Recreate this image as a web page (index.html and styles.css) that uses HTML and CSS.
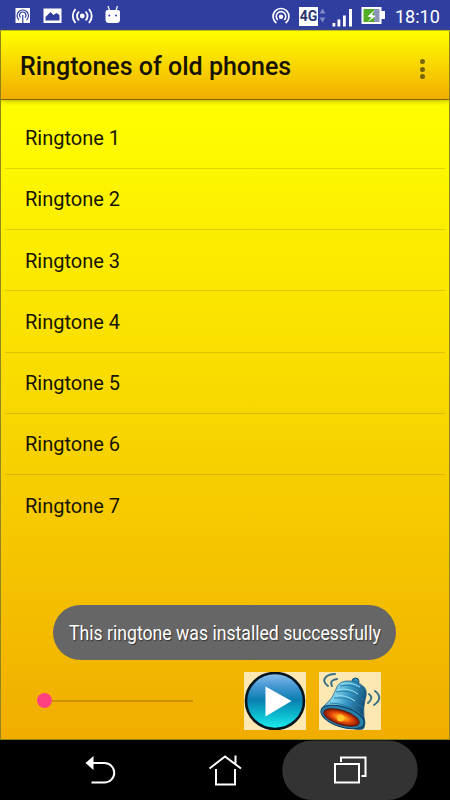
FILE: index.html
```html
<!DOCTYPE html>
<html lang="en">
<head>
<meta charset="utf-8">
<title>Ringtones of old phones</title>
<link rel="stylesheet" href="styles.css">
</head>
<body>
<div class="screen">
  <header class="status">
    <svg class="status-left" width="124" height="30" viewBox="0 0 124 30" fill="none">
      <path fill="#fff" d="M15.500 8h14.500v15h-14.500z"/>
      <g stroke="#303f9f" stroke-width="1.200"><path d="M19 20a5.700 5.700 0 1 1 7.500 0M20.500 17.500a3.200 3.200 0 1 1 4.500 0M22.800 15v8"/></g>
      <path fill="#fff" fill-rule="evenodd" d="M43.500 8.500h18V23h-18zM45.500 20.500h14v-5.500l-3-2-3 2-3-3-5 5z"/>
      <circle cx="82.300" cy="16" r="2.400" fill="#fff"/>
      <path stroke="#fff" stroke-width="1.800" d="M79 11.500q-4 4.500 0 9M85.600 11.500q4 4.500 0 9M75.500 9q-5.500 7 0 14M89 9q5.500 7 0 14"/>
      <path fill="#fff" d="M105.500 12q0-2 2-2h10.500q2 0 2 2v7.500q0 3.500-3.500 3.500h-7.500q-3.500 0-3.500-3.500z"/>
      <path stroke="#fff" stroke-width="1.200" d="m108 6 1.500 4.500M117.500 6 116 10.500"/>
      <circle cx="109.300" cy="15.500" r="1" fill="#303f9f"/><circle cx="116" cy="15.500" r="1" fill="#303f9f"/>
    </svg>
    <div class="status-right">
      <svg width="20" height="20" viewBox="0 0 20 20" fill="none" stroke="#fff" stroke-width="1.600"><path d="M5.400 17a8 8 0 1 1 9.200 0M6.800 14a4.800 4.800 0 1 1 6.400 0"/><circle cx="10" cy="10.800" r="2.200" fill="#fff" stroke="none"/></svg>
      <span class="net">4G</span>
      <svg class="rest" width="66" height="20" viewBox="0 0 66 20"><path fill="#7f88c3" d="m.5 6.500 3-5 3 5zM.5 10.500h6l-3 5z"/><path fill="#fff" d="M13.500 16h2.800v3.500h-2.800zM18.500 12.500h2.800v7h-2.800zM24 8.500h2.800v11H24zM30 2h3v17.500h-3zM42.500 0h20v4h3.500v8h-3.500v5h-20z"/><path fill="#53ac25" d="M44.500 2H55v13H44.500z"/><path fill="#8b96b8" d="M55 2h5.500v13H55z"/><path fill="#fff" d="m55.500 3-7 6.500 4 1-4 4.500 8.500-6-4-1z"/></svg>
      <time class="clock">18:10</time>
    </div>
  </header>
  <main class="app">
    <div class="toolbar">
      <h1>Ringtones of old phones</h1>
      <div class="more"><i></i><i></i><i></i></div>
    </div>
    <ul class="list">
      <li>Ringtone 1</li>
      <li>Ringtone 2</li>
      <li>Ringtone 3</li>
      <li>Ringtone 4</li>
      <li>Ringtone 5</li>
      <li>Ringtone 6</li>
      <li>Ringtone 7</li>
    </ul>
    <div class="toast"><span>This ringtone was installed successfully</span></div>
    <div class="controls">
      <div class="slider"><i class="thumb"></i><i class="track"></i></div>
      <svg class="tile" width="62" height="58" viewBox="0 0 62 58">
        <defs>
          <linearGradient id="blue" x1="0" y1="0" x2="0" y2="1"><stop offset="0" stop-color="#8cc0ec"/><stop offset=".22" stop-color="#4a9ad6"/><stop offset=".48" stop-color="#0a7fb0"/><stop offset=".7" stop-color="#0bafc8"/><stop offset="1" stop-color="#1bf0f0"/></linearGradient>
        </defs>
        <ellipse cx="31" cy="29" rx="29" ry="28" fill="url(#blue)" stroke="#06141d" stroke-width="2.600"/>
        <path fill="#fff" d="M21.500 14.500v30L47.500 29z"/>
      </svg>
      <svg class="tile" width="62" height="58" viewBox="0 0 62 58">
        <defs>
          <linearGradient id="bell" x1="0" y1="0" x2="1" y2=".35"><stop offset="0" stop-color="#2b88b5"/><stop offset=".35" stop-color="#80d2ea"/><stop offset=".65" stop-color="#3596c4"/><stop offset="1" stop-color="#155079"/></linearGradient>
          <radialGradient id="glow"><stop offset="0" stop-color="#ffe34a"/><stop offset=".25" stop-color="#ff9a18"/><stop offset=".6" stop-color="#e34708"/><stop offset="1" stop-color="#7c1607"/></radialGradient>
        </defs>
        <circle cx="36.500" cy="9.500" r="3.500" fill="#2d8cb5" stroke="#174e70"/>
        <path fill="url(#bell)" stroke="#17547b" stroke-width=".7" d="M2 38q2-4 6-7 6-5 9-14 2-7 10-8 11-1 18 6 4 4 1 13-2 9-1 17 2 6 0 11-3 3-9 1z"/>
        <path fill="none" stroke="#2478a4" stroke-width=".9" d="M21 14q13-3 24 6M17 20q15-4 28 8M15 26q15-2 29 10M11 31q18 0 33 13"/>
        <path fill="none" stroke="#9be0ef" d="M22 12q9-3 19 3M19 18q10-3 20 4M17 24q9-2 19 5"/>
        <ellipse cx="23.500" cy="45" rx="22.500" ry="10" transform="rotate(18 23.500 45)" fill="#247faa" stroke="#103d5c"/>
        <ellipse cx="22.500" cy="45.500" rx="18.500" ry="7" transform="rotate(18 22.500 45.500)" fill="url(#glow)" stroke="#5e190d"/>
        <circle cx="21.500" cy="46" r="3.500" fill="#ffc52b"/>
        <path fill="none" stroke="#397083" stroke-width="2" stroke-linecap="round" d="M9 14q-7-5-1-10 3-2 8-2M13 14q-3-6 5-7M50 22q5 4-1 9M56 19q9 7-1 14"/>
      </svg>
    </div>
  </main>
  <nav class="nav">
    <svg width="450" height="60" viewBox="0 0 450 60" fill="none" stroke="#fff" stroke-width="2">
      <path fill="#333" stroke="none" d="M312 .5h76a29.700 29.700 0 0 1 0 59.500h-76a29.700 29.700 0 0 1 0-59.500z"/>
      <path fill="#fff" stroke="none" d="m85.500 23 8-7v14z"/><path d="M92 23h12.500a9.700 9.700 0 0 1 0 19.500H91.500"/>
      <path d="m209.500 28.500 15.500-12 16 12M235.500 23.500v-8M216 29v15.500h19V29"/>
      <path d="M335 24h24v18.500h-24zM341 22v-4.500h24.500v18.500h-4"/>
    </svg>
  </nav>
</div>
</body>
</html>
```
FILE: styles.css
```css
* { box-sizing: border-box; }
body { margin: 0; font-family: Roboto, "Liberation Sans", sans-serif; }
.screen { width: 450px; height: 800px; display: flex; flex-direction: column; overflow: hidden; }
.status { height: 30px; background: #303f9f; display: flex; justify-content: space-between; color: #fff; }
.status-right { display: flex; align-items: center; padding-right: 10px; height: 32px; }
.status-right svg { flex: none; overflow: visible; }
.net { width: 19px; height: 19px; margin: 0 1px 0 8px; background: #fff; color: #27346f; font-size: 14px; font-weight: 700; line-height: 19px; text-align: center; }
.rest { margin-top: 1px; }
.clock { margin-left: 10px; width: 45px; font-size: 18px; white-space: nowrap; }
.app { height: 710px; display: flex; flex-direction: column; border: 1px solid #8f871d; border-top-color: #c8c51a; background: linear-gradient(#ffff00 70px, #f1ad00); }
.toolbar { height: 69px; flex: none; display: flex; align-items: center; justify-content: space-between; padding: 2px 24px 0 19px; background: linear-gradient(#ffff00, #f1ad00); border-bottom: 1px solid #806510; box-shadow: 0 1px 5px #8d790099; }
h1 { margin: 0; font-size: 25px; font-weight: 500; color: #171300; white-space: nowrap; }
.more { display: grid; gap: 2.500px; padding-top: 6px; }
.more i { width: 5px; height: 5px; border-radius: 50%; background: #786500; }
.list { list-style: none; margin: 7.500px 4px 0; padding: 0; }
.list li { height: 61.250px; padding: 1px 20px 0; display: flex; align-items: center; font-size: 20px; color: #171500; border-bottom: 1px solid #00000020; }
.list li:last-child { border-bottom-color: transparent; }
.toast { width: 343px; height: 55px; margin: 68.500px 0 0 52px; flex: none; border-radius: 28px; background: #666; color: #fff; display: flex; align-items: center; padding: 2px 0 0 16px; font-size: 20px; text-shadow: 1px 1px 1px #333; }
.toast span { white-space: nowrap; transform: scaleX(.882); transform-origin: left; }
.controls { display: flex; margin: 12px 0 0 36px; height: 58px; }
.slider { width: 207px; display: flex; align-items: center; }
.thumb { width: 15px; height: 15px; border-radius: 50%; background: #ff4081; }
.track { width: 141px; height: 2px; background: #cc9200; }
.tile { flex: none; background: #fde8b4; margin-right: 13px; }
.nav { height: 60px; background: #000; }
.nav svg { display: block; }
```
